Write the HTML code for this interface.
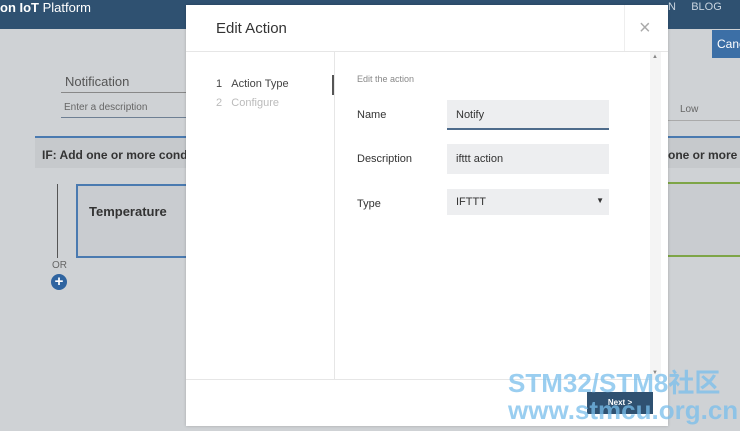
<!DOCTYPE html>
<html><head><meta charset="utf-8"><style>
*{margin:0;padding:0;box-sizing:border-box}
body{width:740px;height:431px;overflow:hidden;background:#cfd2d5;font-family:"Liberation Sans",Arial,sans-serif;position:relative;color:#333}
.a{position:absolute}
</style></head><body>
<div class="a" style="left:0;top:0;width:740px;height:29px;background:#2f5171"></div>
<div class="a" style="left:0;top:0;color:#fff;font-size:13px;line-height:16px"><b>on IoT</b> Platform</div>
<div class="a" style="left:668px;top:0;color:#c9d4df;font-size:11px;line-height:14px;width:72px">N&nbsp;&nbsp;&nbsp;&nbsp;&nbsp;BLOG</div>
<div class="a" style="left:712px;top:30px;width:28px;height:28px;background:#3c6fa6;color:#fff;font-size:12px;line-height:28px;padding-left:5px;overflow:hidden;white-space:nowrap">Cancel</div>
<div class="a" style="left:65px;top:74px;font-size:13px;color:#555">Notification</div>
<div class="a" style="left:61px;top:92px;width:125px;height:1px;background:#888"></div>
<div class="a" style="left:64px;top:102px;font-size:10px;color:#666">Enter a description</div>
<div class="a" style="left:61px;top:117px;width:125px;height:1px;background:#6e7f93"></div>
<div class="a" style="left:668px;top:97px;width:72px;height:24px;border-bottom:1px solid #aaa;font-size:10px;color:#666;padding:7px 0 0 12px">Low</div>
<div class="a" style="left:35px;top:136px;width:151px;height:32px;background:#c6c9cc;border-top:2px solid #4a7ab0;font-size:12px;font-weight:bold;padding:10px 0 0 7px;white-space:nowrap;overflow:hidden">IF: Add one or more conditions</div>
<div class="a" style="left:668px;top:136px;width:72px;height:32px;background:#c6c9cc;border-top:2px solid #4a7ab0;font-size:12px;font-weight:bold;padding:10px 0 0 0;white-space:nowrap;overflow:hidden">one or more actions</div>
<div class="a" style="left:57px;top:184px;width:1px;height:74px;background:#555"></div>
<div class="a" style="left:76px;top:184px;width:115px;height:74px;border:2px solid #4a7ab0;background:#c9ccd0;font-size:13px;font-weight:bold;padding:18px 0 0 11px">Temperature</div>
<div class="a" style="left:668px;top:182px;width:72px;height:75px;border-top:2px solid #7ea547;border-bottom:2px solid #7ea547;background:#c9ccd0"></div>
<div class="a" style="left:52px;top:260px;font-size:10px;color:#666">OR</div>
<div class="a" style="left:51px;top:274px;width:16px;height:16px;border-radius:50%;background:#2f64a0;color:#fff;font-size:15px;line-height:15px;text-align:center;font-weight:bold">+</div>

<div class="a" style="left:186px;top:5px;width:482px;height:421px;background:#fff;box-shadow:0 0 3px rgba(0,0,0,.2)">
  <div class="a" style="left:30px;top:15px;font-size:15px;color:#333">Edit Action</div>
  <div class="a" style="left:0;top:46px;width:482px;height:1px;background:#e6e6e6"></div>
  <div class="a" style="left:438px;top:0;width:1px;height:46px;background:#eee"></div>
  <div class="a" style="left:453px;top:12px;font-size:20px;color:#aaa">×</div>
  <div class="a" style="left:148px;top:47px;width:1px;height:328px;background:#e6e6e6"></div>
  <div class="a" style="left:30px;top:73px;font-size:11px;color:#444">1&nbsp;&nbsp;&nbsp;Action Type</div>
  <div class="a" style="left:30px;top:92px;font-size:11px;color:#bbb">2&nbsp;&nbsp;&nbsp;Configure</div>
  <div class="a" style="left:146px;top:70px;width:2px;height:20px;background:#555"></div>
  <div class="a" style="left:171px;top:69px;font-size:9px;color:#888">Edit the action</div>
  <div class="a" style="left:171px;top:104px;font-size:11px;color:#333">Name</div>
  <div class="a" style="left:171px;top:148px;font-size:11px;color:#333">Description</div>
  <div class="a" style="left:171px;top:193px;font-size:11px;color:#333">Type</div>
  <div class="a" style="left:261px;top:95px;width:162px;height:30px;background:#edeef0;border-bottom:2px solid #4e6b8b;font-size:11px;padding:9px 0 0 9px">Notify</div>
  <div class="a" style="left:261px;top:139px;width:162px;height:30px;background:#edeef0;font-size:11px;padding:9px 0 0 9px">ifttt action</div>
  <div class="a" style="left:261px;top:184px;width:162px;height:26px;background:#edeef0;font-size:11px;padding:7px 0 0 9px">IFTTT<span style="position:absolute;right:5px;top:7px;font-size:8px">▼</span></div>
  <div class="a" style="left:464px;top:47px;width:11px;height:328px;background:#f4f4f4"></div>
  <div class="a" style="left:466px;top:49px;font-size:6px;color:#888">▲</div>
  <div class="a" style="left:466px;top:365px;font-size:6px;color:#888">▼</div>
  <div class="a" style="left:0;top:374px;width:464px;height:1px;background:#e6e6e6"></div>
  <div class="a" style="left:401px;top:387px;width:66px;height:22px;background:#2f5171;color:#fff;font-size:8px;font-weight:bold;text-align:center;line-height:22px">Next &gt;</div>
</div>
<div class="a" style="left:508px;top:369px;font-size:26px;font-weight:bold;color:rgba(120,190,235,.75);line-height:28px;font-family:'Liberation Sans','Noto Sans CJK SC',sans-serif">STM32/STM8社区</div>
<div class="a" style="left:508px;top:396px;font-size:26px;font-weight:bold;color:rgba(120,190,235,.75);line-height:28px">www.stmcu.org.cn</div>
</body></html>
